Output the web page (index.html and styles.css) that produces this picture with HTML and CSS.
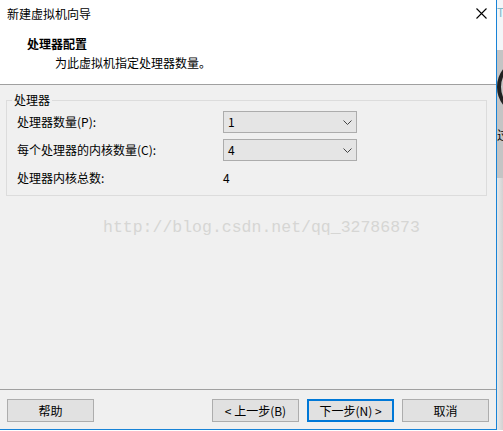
FILE: index.html
```html
<!DOCTYPE html>
<html lang="zh-CN">
<head>
<meta charset="utf-8">
<title>新建虚拟机向导</title>
<link rel="stylesheet" href="styles.css">
</head>
<body>
<div class="screen">
  <div class="window">
    <div class="header">
      <div class="titlebar">
        <span class="title">新建虚拟机向导</span>
        <svg class="close" width="11" height="11" viewBox="0 0 11 11"><path d="M0.5 0.5 L10.5 10.5 M10.5 0.5 L0.5 10.5" stroke="#000" stroke-width="1.1" fill="none"/></svg>
      </div>
      <div class="heading">处理器配置</div>
      <div class="subtitle">为此虚拟机指定处理器数量。</div>
    </div>
    <div class="body">
      <div class="group">
        <div class="legend">处理器</div>
        <div class="grid">
          <div class="label">处理器数量(P):</div>
          <div class="select"><span>1</span><svg width="9" height="5" viewBox="0 0 9 5"><path d="M0.5 0.5 L4.5 4.5 L8.5 0.5" stroke="#444" stroke-width="1" fill="none"/></svg></div>
          <div class="label">每个处理器的内核数量(C):</div>
          <div class="select"><span>4</span><svg width="9" height="5" viewBox="0 0 9 5"><path d="M0.5 0.5 L4.5 4.5 L8.5 0.5" stroke="#444" stroke-width="1" fill="none"/></svg></div>
          <div class="label">处理器内核总数:</div>
          <div class="value">4</div>
        </div>
      </div>
      <div class="watermark">http://blog.csdn.net/qq_32786873</div>
    </div>
    <div class="footer">
      <button class="btn">帮助</button>
      <div class="spacer"></div>
      <button class="btn">&lt; 上一步(B)</button>
      <button class="btn default">下一步(N) &gt;</button>
      <button class="btn">取消</button>
    </div>
  </div>
  <div class="outside">
    <div class="out-top">T</div>
    <div class="out-grey">
      <div class="ring"></div>
      <div class="out-char">过</div>
    </div>
    <div class="out-rest"></div>
  </div>
</div>
</body>
</html>
```
FILE: styles.css
```css
html, body {
  margin: 0;
  padding: 0;
  background: #ffffff;
}
body {
  font-family: "Noto Sans CJK SC", "Noto Sans", sans-serif;
  font-size: 12px;
  line-height: 16px;
  color: #000;
}
.screen {
  display: flex;
  width: 503px;
  height: 431px;
  overflow: hidden;
}
.window {
  width: 496px;
  height: 429px;
  border-right: 1px solid #1883d7;
  border-bottom: 1px solid #1883d7;
  display: flex;
  flex-direction: column;
  background: #f0f0f0;
  flex: none;
}
.header {
  background: #ffffff;
  height: 84px;
  border-bottom: 1px solid #a0a0a0;
  box-sizing: content-box;
}
.titlebar {
  display: flex;
  justify-content: space-between;
  align-items: flex-start;
  padding: 6px 9px 0 7px;
  height: 16px;
}
.close {
  margin-top: 2px;
}
.heading {
  margin-top: 14px;
  padding-left: 27px;
  font-weight: bold;
}
.subtitle {
  margin-top: 3px;
  padding-left: 55px;
}
.body {
  flex: 1;
  padding-top: 15px;
}
.group {
  margin-left: 6px;
  width: 479px;
  border: 1px solid #dcdcdc;
  padding: 0 0 6px 10px;
  box-sizing: content-box;
  width: 469px;
}
.legend {
  width: max-content;
  margin: -9px 0 0 -5px;
  padding: 0 2px;
  background: #f0f0f0;
  line-height: 16px;
}
.grid {
  margin-top: 3px;
  display: grid;
  grid-template-columns: 206px 134px;
  grid-auto-rows: 22px;
  row-gap: 6px;
  align-items: center;
}
.select {
  height: 22px;
  box-sizing: border-box;
  border: 1px solid #acacac;
  background: #e5e5e5;
  display: flex;
  align-items: center;
  justify-content: space-between;
  padding: 0 4px 0 4px;
}
.select svg {
  margin-right: 0;
}
.watermark {
  margin: 22px 0 0 103px;
  font-family: "Liberation Mono", monospace;
  font-size: 16.5px;
  line-height: 20px;
  color: #d6d6d4;
  white-space: nowrap;
}
.footer {
  height: 39px;
  border-top: 1px solid #a0a0a0;
  box-sizing: content-box;
  display: flex;
  align-items: flex-start;
  gap: 8px;
  padding: 9px 7px 0 7px;
  box-sizing: border-box;
  height: 40px;
}
.spacer {
  flex: 1;
}
.btn {
  width: 87px;
  height: 23px;
  box-sizing: border-box;
  border: 1px solid #adadad;
  background: #e1e1e1;
  font-family: "Noto Sans CJK SC", "Noto Sans", sans-serif;
  font-size: 12px;
  line-height: 16px;
  color: #000;
  padding: 0;
  margin: 0;
}
.btn.default {
  border: 2px solid #0078d7;
}
.outside {
  width: 6px;
  flex: none;
  display: flex;
  flex-direction: column;
  height: 430px;
}
.out-top {
  height: 50px;
  background: #f3f6f8;
  color: #7fb9c9;
  font-size: 12px;
  line-height: 16px;
  padding-top: 4px;
  box-sizing: border-box;
  overflow: hidden;
  white-space: nowrap;
}
.out-grey {
  height: 128px;
  background: #c4c4c4;
  overflow: hidden;
  display: flex;
  flex-direction: column;
}
.ring {
  margin-top: 8px;
  width: 50px;
  height: 50px;
  border: 4px solid #222;
  border-radius: 50%;
  flex: none;
}
.out-char {
  margin-top: 12px;
  font-size: 12px;
  line-height: 14px;
  white-space: nowrap;
  color: #000;
}
.out-rest {
  flex: 1;
  background: linear-gradient(to right, #e8e8e8, #d2d2d2);
}
```
